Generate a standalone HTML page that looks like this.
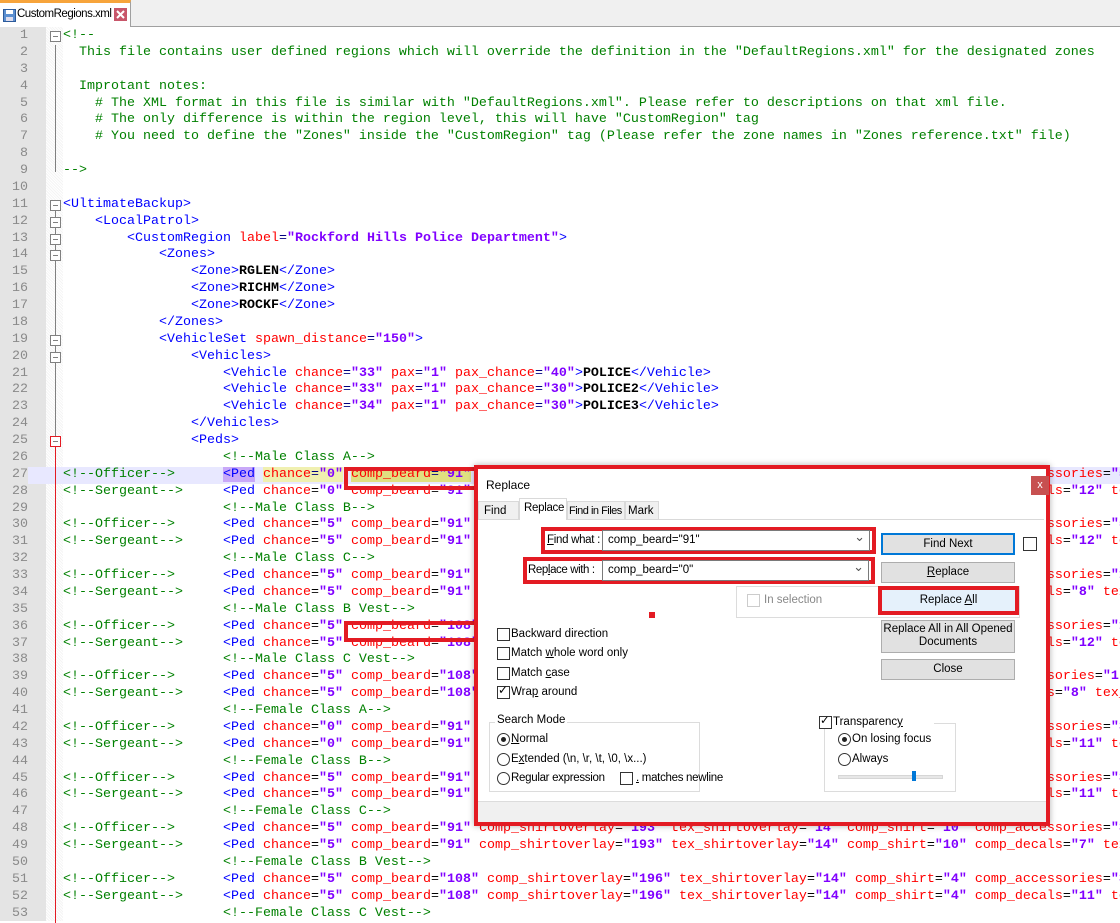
<!DOCTYPE html>
<html><head><meta charset="utf-8"><style>
*{margin:0;padding:0;box-sizing:border-box}
body{width:1120px;height:921px;overflow:hidden;background:#fff;position:relative;font-family:"Liberation Sans",sans-serif}
#tabbar{position:absolute;left:0;top:0;width:1120px;height:27px;background:#f0f0f0;border-bottom:1px solid #a0a0a0}
#tab{position:absolute;left:0;top:0;width:131px;height:27px;background:#fff;border-top:3px solid #f7a43b;border-right:1px solid #a0a0a0;font-size:11.5px;letter-spacing:-0.5px}
#gut{position:absolute;left:0;top:27px;width:46px;height:894px;background:#e4e4e4}
#fold{position:absolute;left:46px;top:27px;width:17px;height:894px;background:repeating-linear-gradient(45deg,#f4f4f4 0 1px,#fff 1px 2px)}
#code{position:absolute;left:0;top:28px;width:1120px;font-family:"Liberation Mono",monospace;font-size:13.33px;line-height:16.88px}
.ln{position:relative;height:16.88px;white-space:nowrap}
.n{position:absolute;left:0;width:28px;text-align:right;color:#8a8a8a}
.tx{position:absolute;left:63px;white-space:pre}
.c{color:#008000}.t{color:#0000ff}.a{color:#ff0000}.v{color:#8000ff;font-weight:bold}.b{font-weight:bold;color:#000}.e{color:#000080}
.fb{position:absolute;left:50px;top:3px;width:11px;height:11px;border:1px solid #808080;background:#fff}
.fb:after{content:"";position:absolute;left:2px;top:4px;width:5px;height:1px;background:#808080}
.vl{position:absolute;left:55px;top:0;width:1px;height:17px;background:#808080}
.dlg{position:absolute;font-size:11.5px;color:#000}
.rb{position:absolute;border:4px solid #e31b23}
.btn{position:absolute;background:#e1e1e1;border:1px solid #adadad;text-align:center;font-size:11.5px;line-height:18px}
.cb{position:absolute;width:13px;height:13px;border:1px solid #333;background:#fff}
.rd{position:absolute;width:13px;height:13px;border:1px solid #333;border-radius:50%;background:#fff}
.lbl{position:absolute;font-size:11.5px;white-space:nowrap}
.combo{position:absolute;background:#fff;border:1px solid #7a7a7a;height:21px;font-size:11.5px;line-height:19px;padding-left:5px}
.combo:after{content:"⌄";position:absolute;right:4px;top:-4px;color:#555;font-size:13px}
</style></head><body>
<div id="tabbar"><div id="tab"><svg style="position:absolute;left:3px;top:6px" width="13" height="13"><rect x="0.5" y="0.5" width="12" height="12" fill="#5b8fd0" stroke="#2c5a9a"/><rect x="3" y="1" width="7" height="4" fill="#fff"/><rect x="3" y="8" width="7" height="4" fill="#dde"/></svg><span style="position:absolute;left:17px;top:5px">CustomRegions.xml</span><svg style="position:absolute;left:114px;top:5px" width="13" height="13"><rect width="13" height="13" fill="#c8566a"/><path d="M3 3L10 10M10 3L3 10" stroke="#fff" stroke-width="2"/></svg></div></div>
<div id="gut"></div><div id="fold"></div>
<div id="code">
<div class="ln"><span class="n">1</span><span class="fb"></span><span class="tx c">&lt;!--</span></div>
<div class="ln"><span class="n">2</span><span class="vl"></span><span class="tx c">  This file contains user defined regions which will override the definition in the "DefaultRegions.xml" for the designated zones</span></div>
<div class="ln"><span class="n">3</span><span class="vl"></span></div>
<div class="ln"><span class="n">4</span><span class="vl"></span><span class="tx c">  Improtant notes:</span></div>
<div class="ln"><span class="n">5</span><span class="vl"></span><span class="tx c">    # The XML format in this file is similar with "DefaultRegions.xml". Please refer to descriptions on that xml file.</span></div>
<div class="ln"><span class="n">6</span><span class="vl"></span><span class="tx c">    # The only difference is within the region level, this will have "CustomRegion" tag</span></div>
<div class="ln"><span class="n">7</span><span class="vl"></span><span class="tx c">    # You need to define the "Zones" inside the "CustomRegion" tag (Please refer the zone names in "Zones reference.txt" file)</span></div>
<div class="ln"><span class="n">8</span><span class="vl"></span></div>
<div class="ln"><span class="n">9</span><span class="vl" style="height:9px"></span><span class="tx c">--&gt;</span></div>
<div class="ln"><span class="n">10</span></div>
<div class="ln"><span class="n">11</span><span class="vl" style="top:9px;height:8px"></span><span class="fb"></span><span class="tx t">&lt;UltimateBackup&gt;</span></div>
<div class="ln"><span class="n">12</span><span class="vl"></span><span class="fb"></span><span class="tx t">    &lt;LocalPatrol&gt;</span></div>
<div class="ln"><span class="n">13</span><span class="vl"></span><span class="fb"></span><span class="tx">        <span class="t">&lt;CustomRegion </span><span class="a">label</span><span class="e">=</span><span class="v">"Rockford Hills Police Department"</span><span class="t">&gt;</span></span></div>
<div class="ln"><span class="n">14</span><span class="vl"></span><span class="fb"></span><span class="tx t">            &lt;Zones&gt;</span></div>
<div class="ln"><span class="n">15</span><span class="vl"></span><span class="tx">                <span class="t">&lt;Zone&gt;</span><span class="b">RGLEN</span><span class="t">&lt;/Zone&gt;</span></span></div>
<div class="ln"><span class="n">16</span><span class="vl"></span><span class="tx">                <span class="t">&lt;Zone&gt;</span><span class="b">RICHM</span><span class="t">&lt;/Zone&gt;</span></span></div>
<div class="ln"><span class="n">17</span><span class="vl"></span><span class="tx">                <span class="t">&lt;Zone&gt;</span><span class="b">ROCKF</span><span class="t">&lt;/Zone&gt;</span></span></div>
<div class="ln"><span class="n">18</span><span class="vl"></span><span class="tx t">            &lt;/Zones&gt;</span></div>
<div class="ln"><span class="n">19</span><span class="vl"></span><span class="fb"></span><span class="tx">            <span class="t">&lt;VehicleSet </span><span class="a">spawn_distance</span><span class="e">=</span><span class="v">"150"</span><span class="t">&gt;</span></span></div>
<div class="ln"><span class="n">20</span><span class="vl"></span><span class="fb"></span><span class="tx t">                &lt;Vehicles&gt;</span></div>
<div class="ln"><span class="n">21</span><span class="vl"></span><span class="tx">                    <span class="t">&lt;Vehicle </span><span class="a">chance</span><span class="e">=</span><span class="v">"33"</span> <span class="a">pax</span><span class="e">=</span><span class="v">"1"</span> <span class="a">pax_chance</span><span class="e">=</span><span class="v">"40"</span><span class="t">&gt;</span><span class="b">POLICE</span><span class="t">&lt;/Vehicle&gt;</span></span></div>
<div class="ln"><span class="n">22</span><span class="vl"></span><span class="tx">                    <span class="t">&lt;Vehicle </span><span class="a">chance</span><span class="e">=</span><span class="v">"33"</span> <span class="a">pax</span><span class="e">=</span><span class="v">"1"</span> <span class="a">pax_chance</span><span class="e">=</span><span class="v">"30"</span><span class="t">&gt;</span><span class="b">POLICE2</span><span class="t">&lt;/Vehicle&gt;</span></span></div>
<div class="ln"><span class="n">23</span><span class="vl"></span><span class="tx">                    <span class="t">&lt;Vehicle </span><span class="a">chance</span><span class="e">=</span><span class="v">"34"</span> <span class="a">pax</span><span class="e">=</span><span class="v">"1"</span> <span class="a">pax_chance</span><span class="e">=</span><span class="v">"30"</span><span class="t">&gt;</span><span class="b">POLICE3</span><span class="t">&lt;/Vehicle&gt;</span></span></div>
<div class="ln"><span class="n">24</span><span class="vl"></span><span class="tx t">                &lt;/Vehicles&gt;</span></div>
<div class="ln"><span class="n">25</span><span class="vl" style="background:#e31b23;top:9px;height:8px"></span><span class="vl" style="height:4px"></span><span class="fb" style="border-color:#e31b23"></span><span class="tx t">                &lt;Peds&gt;</span></div>
<div class="ln"><span class="n">26</span><span class="vl" style="background:#e31b23"></span><span class="tx c">                    &lt;!--Male Class A--&gt;</span></div>
<div class="ln" style="background:#e8e8ff"><span class="n" style="background:#e4e4e4;height:17px">27</span><span class="vl" style="background:#e31b23"></span><span class="tx"><span class="c">&lt;!--Officer--&gt;</span>      <span class="t" style="background:#c8a8f8">&lt;Ped</span> <span class="a" style="background:#f0f0b0">chance</span><span class="e" style="background:#f0f0b0">=</span><span class="v" style="background:#f0f0b0">"0"</span> <span class="a" style="background:#e0e080">comp_beard</span><span class="e" style="background:#e0e080">=</span><span class="v" style="background:#e0e080">"91"</span> <span class="a">comp_shirtoverlay</span>=<span class="v">"193"</span> <span class="a">tex_shirtoverlay</span>=<span class="v">"14"</span> <span class="a">comp_shirt</span>=<span class="v">"10"</span> <span class="a">comp_accessories</span>=<span class="v">"5"</span></span></div>
<div class="ln"><span class="n">28</span><span class="vl" style="background:#e31b23"></span><span class="tx"><span class="c">&lt;!--Sergeant--&gt;</span>     <span class="t">&lt;Ped </span><span class="a">chance</span>=<span class="v">"0"</span> <span class="a">comp_beard</span>=<span class="v">"91"</span> <span class="a">comp_shirtoverlay</span>=<span class="v">"193"</span> <span class="a">tex_shirtoverlay</span>=<span class="v">"14"</span> <span class="a">comp_shirt</span>=<span class="v">"10"</span> <span class="a">comp_decals</span>=<span class="v">"12"</span> <span class="a">tex_decals</span></span></div>
<div class="ln"><span class="n">29</span><span class="vl" style="background:#e31b23"></span><span class="tx c">                    &lt;!--Male Class B--&gt;</span></div>
<div class="ln"><span class="n">30</span><span class="vl" style="background:#e31b23"></span><span class="tx"><span class="c">&lt;!--Officer--&gt;</span>      <span class="t">&lt;Ped </span><span class="a">chance</span>=<span class="v">"5"</span> <span class="a">comp_beard</span>=<span class="v">"91"</span> <span class="a">comp_shirtoverlay</span>=<span class="v">"193"</span> <span class="a">tex_shirtoverlay</span>=<span class="v">"14"</span> <span class="a">comp_shirt</span>=<span class="v">"10"</span> <span class="a">comp_accessories</span>=<span class="v">"5"</span></span></div>
<div class="ln"><span class="n">31</span><span class="vl" style="background:#e31b23"></span><span class="tx"><span class="c">&lt;!--Sergeant--&gt;</span>     <span class="t">&lt;Ped </span><span class="a">chance</span>=<span class="v">"5"</span> <span class="a">comp_beard</span>=<span class="v">"91"</span> <span class="a">comp_shirtoverlay</span>=<span class="v">"193"</span> <span class="a">tex_shirtoverlay</span>=<span class="v">"14"</span> <span class="a">comp_shirt</span>=<span class="v">"10"</span> <span class="a">comp_decals</span>=<span class="v">"12"</span> <span class="a">tex_decals</span></span></div>
<div class="ln"><span class="n">32</span><span class="vl" style="background:#e31b23"></span><span class="tx c">                    &lt;!--Male Class C--&gt;</span></div>
<div class="ln"><span class="n">33</span><span class="vl" style="background:#e31b23"></span><span class="tx"><span class="c">&lt;!--Officer--&gt;</span>      <span class="t">&lt;Ped </span><span class="a">chance</span>=<span class="v">"5"</span> <span class="a">comp_beard</span>=<span class="v">"91"</span> <span class="a">comp_shirtoverlay</span>=<span class="v">"193"</span> <span class="a">tex_shirtoverlay</span>=<span class="v">"14"</span> <span class="a">comp_shirt</span>=<span class="v">"10"</span> <span class="a">comp_accessories</span>=<span class="v">"1"</span></span></div>
<div class="ln"><span class="n">34</span><span class="vl" style="background:#e31b23"></span><span class="tx"><span class="c">&lt;!--Sergeant--&gt;</span>     <span class="t">&lt;Ped </span><span class="a">chance</span>=<span class="v">"5"</span> <span class="a">comp_beard</span>=<span class="v">"91"</span> <span class="a">comp_shirtoverlay</span>=<span class="v">"193"</span> <span class="a">tex_shirtoverlay</span>=<span class="v">"14"</span> <span class="a">comp_shirt</span>=<span class="v">"10"</span> <span class="a">comp_decals</span>=<span class="v">"8"</span> <span class="a">tex_decals</span></span></div>
<div class="ln"><span class="n">35</span><span class="vl" style="background:#e31b23"></span><span class="tx c">                    &lt;!--Male Class B Vest--&gt;</span></div>
<div class="ln"><span class="n">36</span><span class="vl" style="background:#e31b23"></span><span class="tx"><span class="c">&lt;!--Officer--&gt;</span>      <span class="t">&lt;Ped </span><span class="a">chance</span>=<span class="v">"5"</span> <span class="a">comp_beard</span>=<span class="v">"108"</span> <span class="a">comp_shirtoverlay</span>=<span class="v">"196"</span> <span class="a">tex_shirtoverlay</span>=<span class="v">"14"</span> <span class="a">comp_shirt</span>=<span class="v">"4"</span> <span class="a">comp_accessories</span>=<span class="v">"1"</span></span></div>
<div class="ln"><span class="n">37</span><span class="vl" style="background:#e31b23"></span><span class="tx"><span class="c">&lt;!--Sergeant--&gt;</span>     <span class="t">&lt;Ped </span><span class="a">chance</span>=<span class="v">"5"</span> <span class="a">comp_beard</span>=<span class="v">"108"</span> <span class="a">comp_shirtoverlay</span>=<span class="v">"196"</span> <span class="a">tex_shirtoverlay</span>=<span class="v">"14"</span> <span class="a">comp_shirt</span>=<span class="v">"4"</span> <span class="a">comp_decals</span>=<span class="v">"12"</span> <span class="a">tex_decals</span></span></div>
<div class="ln"><span class="n">38</span><span class="vl" style="background:#e31b23"></span><span class="tx c">                    &lt;!--Male Class C Vest--&gt;</span></div>
<div class="ln"><span class="n">39</span><span class="vl" style="background:#e31b23"></span><span class="tx"><span class="c">&lt;!--Officer--&gt;</span>      <span class="t">&lt;Ped </span><span class="a">chance</span>=<span class="v">"5"</span> <span class="a">comp_beard</span>=<span class="v">"108"</span> <span class="a">comp_shirtoverlay</span>=<span class="v">"19"</span> <span class="a">tex_shirtoverlay</span>=<span class="v">"14"</span> <span class="a">comp_shirt</span>=<span class="v">"4"</span> <span class="a">comp_accessories</span>=<span class="v">"1"</span></span></div>
<div class="ln"><span class="n">40</span><span class="vl" style="background:#e31b23"></span><span class="tx"><span class="c">&lt;!--Sergeant--&gt;</span>     <span class="t">&lt;Ped </span><span class="a">chance</span>=<span class="v">"5"</span> <span class="a">comp_beard</span>=<span class="v">"108"</span> <span class="a">comp_shirtoverlay</span>=<span class="v">"19"</span> <span class="a">tex_shirtoverlay</span>=<span class="v">"14"</span> <span class="a">comp_shirt</span>=<span class="v">"4"</span> <span class="a">comp_decals</span>=<span class="v">"8"</span> <span class="a">tex_decals</span></span></div>
<div class="ln"><span class="n">41</span><span class="vl" style="background:#e31b23"></span><span class="tx c">                    &lt;!--Female Class A--&gt;</span></div>
<div class="ln"><span class="n">42</span><span class="vl" style="background:#e31b23"></span><span class="tx"><span class="c">&lt;!--Officer--&gt;</span>      <span class="t">&lt;Ped </span><span class="a">chance</span>=<span class="v">"0"</span> <span class="a">comp_beard</span>=<span class="v">"91"</span> <span class="a">comp_shirtoverlay</span>=<span class="v">"193"</span> <span class="a">tex_shirtoverlay</span>=<span class="v">"14"</span> <span class="a">comp_shirt</span>=<span class="v">"10"</span> <span class="a">comp_accessories</span>=<span class="v">"3"</span></span></div>
<div class="ln"><span class="n">43</span><span class="vl" style="background:#e31b23"></span><span class="tx"><span class="c">&lt;!--Sergeant--&gt;</span>     <span class="t">&lt;Ped </span><span class="a">chance</span>=<span class="v">"0"</span> <span class="a">comp_beard</span>=<span class="v">"91"</span> <span class="a">comp_shirtoverlay</span>=<span class="v">"193"</span> <span class="a">tex_shirtoverlay</span>=<span class="v">"14"</span> <span class="a">comp_shirt</span>=<span class="v">"10"</span> <span class="a">comp_decals</span>=<span class="v">"11"</span> <span class="a">tex_decals</span></span></div>
<div class="ln"><span class="n">44</span><span class="vl" style="background:#e31b23"></span><span class="tx c">                    &lt;!--Female Class B--&gt;</span></div>
<div class="ln"><span class="n">45</span><span class="vl" style="background:#e31b23"></span><span class="tx"><span class="c">&lt;!--Officer--&gt;</span>      <span class="t">&lt;Ped </span><span class="a">chance</span>=<span class="v">"5"</span> <span class="a">comp_beard</span>=<span class="v">"91"</span> <span class="a">comp_shirtoverlay</span>=<span class="v">"193"</span> <span class="a">tex_shirtoverlay</span>=<span class="v">"14"</span> <span class="a">comp_shirt</span>=<span class="v">"10"</span> <span class="a">comp_accessories</span>=<span class="v">"3"</span></span></div>
<div class="ln"><span class="n">46</span><span class="vl" style="background:#e31b23"></span><span class="tx"><span class="c">&lt;!--Sergeant--&gt;</span>     <span class="t">&lt;Ped </span><span class="a">chance</span>=<span class="v">"5"</span> <span class="a">comp_beard</span>=<span class="v">"91"</span> <span class="a">comp_shirtoverlay</span>=<span class="v">"193"</span> <span class="a">tex_shirtoverlay</span>=<span class="v">"14"</span> <span class="a">comp_shirt</span>=<span class="v">"10"</span> <span class="a">comp_decals</span>=<span class="v">"11"</span> <span class="a">tex_decals</span></span></div>
<div class="ln"><span class="n">47</span><span class="vl" style="background:#e31b23"></span><span class="tx c">                    &lt;!--Female Class C--&gt;</span></div>
<div class="ln"><span class="n">48</span><span class="vl" style="background:#e31b23"></span><span class="tx"><span class="c">&lt;!--Officer--&gt;</span>      <span class="t">&lt;Ped </span><span class="a">chance</span>=<span class="v">"5"</span> <span class="a">comp_beard</span>=<span class="v">"91"</span> <span class="a">comp_shirtoverlay</span>=<span class="v">"193"</span> <span class="a">tex_shirtoverlay</span>=<span class="v">"14"</span> <span class="a">comp_shirt</span>=<span class="v">"10"</span> <span class="a">comp_accessories</span>=<span class="v">"3"</span></span></div>
<div class="ln"><span class="n">49</span><span class="vl" style="background:#e31b23"></span><span class="tx"><span class="c">&lt;!--Sergeant--&gt;</span>     <span class="t">&lt;Ped </span><span class="a">chance</span>=<span class="v">"5"</span> <span class="a">comp_beard</span>=<span class="v">"91"</span> <span class="a">comp_shirtoverlay</span>=<span class="v">"193"</span> <span class="a">tex_shirtoverlay</span>=<span class="v">"14"</span> <span class="a">comp_shirt</span>=<span class="v">"10"</span> <span class="a">comp_decals</span>=<span class="v">"7"</span> <span class="a">tex_decals</span></span></div>
<div class="ln"><span class="n">50</span><span class="vl" style="background:#e31b23"></span><span class="tx c">                    &lt;!--Female Class B Vest--&gt;</span></div>
<div class="ln"><span class="n">51</span><span class="vl" style="background:#e31b23"></span><span class="tx"><span class="c">&lt;!--Officer--&gt;</span>      <span class="t">&lt;Ped </span><span class="a">chance</span>=<span class="v">"5"</span> <span class="a">comp_beard</span>=<span class="v">"108"</span> <span class="a">comp_shirtoverlay</span>=<span class="v">"196"</span> <span class="a">tex_shirtoverlay</span>=<span class="v">"14"</span> <span class="a">comp_shirt</span>=<span class="v">"4"</span> <span class="a">comp_accessories</span>=<span class="v">"3"</span></span></div>
<div class="ln"><span class="n">52</span><span class="vl" style="background:#e31b23"></span><span class="tx"><span class="c">&lt;!--Sergeant--&gt;</span>     <span class="t">&lt;Ped </span><span class="a">chance</span>=<span class="v">"5"</span> <span class="a">comp_beard</span>=<span class="v">"108"</span> <span class="a">comp_shirtoverlay</span>=<span class="v">"196"</span> <span class="a">tex_shirtoverlay</span>=<span class="v">"14"</span> <span class="a">comp_shirt</span>=<span class="v">"4"</span> <span class="a">comp_decals</span>=<span class="v">"11"</span> <span class="a">tex_decals</span></span></div>
<div class="ln"><span class="n">53</span><span class="vl" style="background:#e31b23"></span><span class="tx c">                    &lt;!--Female Class C Vest--&gt;</span></div>
</div>

<div class="rb" style="left:344px;top:467px;width:134px;height:23px"></div>
<div class="rb" style="left:344px;top:621px;width:134px;height:21px"></div>

<div class="dlg" style="left:474px;top:465px;width:576px;height:361px;background:#fff;border:4px solid #e31b23;box-shadow:0 0 6px rgba(0,0,0,.3)">
  <div class="lbl" style="left:8px;top:9px;font-size:12px">Replace</div>
  <div style="position:absolute;left:553px;top:7px;width:18px;height:19px;background:#c75050;color:#fff;font-size:11px;text-align:center;line-height:18px">x</div>
  <div style="position:absolute;left:0;top:50px;width:566px;height:1px;background:#d9d9d9"></div>
  <div style="position:absolute;left:0;top:32px;width:41px;height:19px;background:#f0f0f0;border:1px solid #d9d9d9"></div><div class="lbl" style="left:6px;top:36px">Find</div>
  <div style="position:absolute;left:41px;top:29px;width:48px;height:22px;background:#fff;border:1px solid #d9d9d9;border-bottom:none"></div><div class="lbl" style="left:46px;top:33px;letter-spacing:-0.3px">Replace</div>
  <div style="position:absolute;left:89px;top:32px;width:58px;height:19px;background:#f0f0f0;border:1px solid #d9d9d9"></div><div class="lbl" style="left:91px;top:36px;letter-spacing:-0.5px;font-size:11px">Find in Files</div>
  <div style="position:absolute;left:147px;top:32px;width:34px;height:19px;background:#f0f0f0;border:1px solid #d9d9d9"></div><div class="lbl" style="left:150px;top:36px">Mark</div>

  <div class="rb" style="left:63px;top:58px;width:335px;height:27px"></div>
  <div class="lbl" style="left:69px;top:65px;letter-spacing:-0.3px"><u>F</u>ind what :</div>
  <div class="combo" style="left:124px;top:61px;width:268px">comp_beard="91"</div>
  <div class="rb" style="left:45px;top:88px;width:352px;height:27px"></div>
  <div class="lbl" style="left:50px;top:95px;letter-spacing:-0.4px">Rep<u>l</u>ace with :</div>
  <div class="combo" style="left:124px;top:91px;width:267px">comp_beard="0"</div>

  <div class="btn" style="left:403px;top:64px;width:134px;height:22px;border:2px solid #0078d7;line-height:18px">Find Next</div>
  <div class="cb" style="left:545px;top:68px;width:14px;height:14px"></div>
  <div class="btn" style="left:403px;top:93px;width:134px;height:21px"><u>R</u>eplace</div>
  <div style="position:absolute;left:258px;top:117px;width:284px;height:32px;border:1px solid #dcdcdc"></div>
  <div class="cb" style="left:269px;top:125px;border-color:#ccc"></div>
  <div class="lbl" style="left:286px;top:125px;color:#888">In selection</div>
  <div class="rb" style="left:400px;top:117px;width:141px;height:29px"></div>
  <div class="btn" style="left:404px;top:121px;width:133px;height:21px;background:#e5f1fb;border:none;line-height:21px">Replace <u>A</u>ll</div>
  <div style="position:absolute;left:171px;top:143px;width:6px;height:6px;background:#e31b23"></div>
  <div class="btn" style="left:403px;top:151px;width:134px;height:33px;line-height:13px;padding-top:2px">Replace All in All Opened Documents</div>
  <div class="btn" style="left:403px;top:190px;width:134px;height:21px">Close</div>

  <div class="cb" style="left:19px;top:159px"></div><div class="lbl" style="left:33px;top:159px">Backward direction</div>
  <div class="cb" style="left:19px;top:178px"></div><div class="lbl" style="left:33px;top:178px">Match <u>w</u>hole word only</div>
  <div class="cb" style="left:19px;top:198px"></div><div class="lbl" style="left:33px;top:198px">Match <u>c</u>ase</div>
  <div class="cb" style="left:19px;top:217px"></div><div class="lbl" style="left:20px;top:214px;font-size:12px">✓</div><div class="lbl" style="left:33px;top:217px">Wra<u>p</u> around</div>

  <div style="position:absolute;left:11px;top:253px;width:211px;height:70px;border:1px solid #dcdcdc"></div>
  <div class="lbl" style="left:17px;top:245px;background:#fff;padding:0 2px">Search Mode</div>
  <div class="rd" style="left:19px;top:264px"></div><div style="position:absolute;left:23px;top:268px;width:5px;height:5px;border-radius:50%;background:#222"></div><div class="lbl" style="left:33px;top:264px"><u>N</u>ormal</div>
  <div class="rd" style="left:19px;top:284px"></div><div class="lbl" style="left:33px;top:284px">E<u>x</u>tended (\n, \r, \t, \0, \x...)</div>
  <div class="rd" style="left:19px;top:303px"></div><div class="lbl" style="left:33px;top:303px;letter-spacing:-0.3px">Re<u>g</u>ular expression</div>
  <div class="cb" style="left:142px;top:303px"></div><div class="lbl" style="left:158px;top:303px;letter-spacing:-0.3px"><u>.</u> matches newline</div>

  <div style="position:absolute;left:346px;top:254px;width:132px;height:69px;border:1px solid #dcdcdc"></div>
  <div style="position:absolute;left:341px;top:246px;width:115px;height:14px;background:#fff"></div>
  <div class="cb" style="left:341px;top:247px"></div><div class="lbl" style="left:342px;top:244px">✓</div><div class="lbl" style="left:355px;top:247px">Transparenc<u>y</u></div>
  <div class="rd" style="left:360px;top:264px"></div><div style="position:absolute;left:364px;top:268px;width:5px;height:5px;border-radius:50%;background:#222"></div><div class="lbl" style="left:374px;top:264px">On losing focus</div>
  <div class="rd" style="left:360px;top:284px"></div><div class="lbl" style="left:374px;top:284px">Always</div>
  <div style="position:absolute;left:360px;top:306px;width:105px;height:4px;background:#e7e7e7;border:1px solid #d6d6d6"></div>
  <div style="position:absolute;left:434px;top:302px;width:4px;height:10px;background:#0078d7"></div>

  <div style="position:absolute;left:0;top:332px;width:568px;height:21px;background:#f0f0f0;border-top:1px solid #dcdcdc"></div>
</div>
</body></html>
